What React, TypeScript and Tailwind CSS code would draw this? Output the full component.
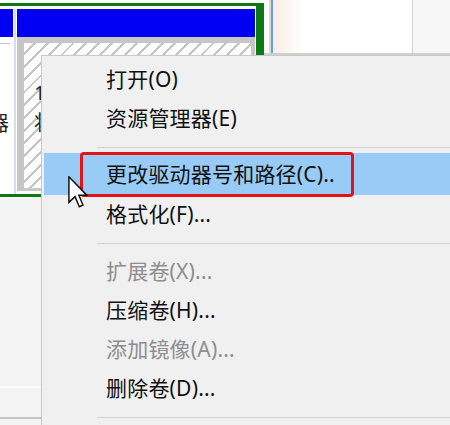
import React from "react";

type Item = { label: string; disabled?: boolean; h: string; highlight?: boolean };

function Sep({ h }: { h: string }) {
  return (
    <div className={`${h} pt-[9px]`}>
      <div className="ml-[53px] h-px bg-[#d2d2d2]" />
    </div>
  );
}

function Row({ label, disabled, h, highlight }: Item) {
  return (
    <div
      className={`relative ${h} flex items-center pl-[62px] text-[21px] tracking-[0.2px] leading-none whitespace-nowrap ${
        highlight ? "bg-[#98cbf5]" : ""
      } ${disabled ? "text-[#8e8e8e]" : "text-[#111111]"}`}
    >
      {label}
      {highlight && (
        <div className="absolute left-[36px] top-[-1px] w-[274px] h-[45px] border-[3px] border-[#e3131c] rounded-[4px]" />
      )}
    </div>
  );
}

export default function App() {
  return (
    <div className="relative w-[450px] h-[425px] overflow-hidden bg-[#f3f3f3] font-['Noto_Sans','Noto_Sans_CJK_SC',sans-serif]">
      {/* background: disk map */}
      <div className="flex h-[198px]">
        <div className="w-[264px] h-[198px] pt-[3px] bg-white">
          <div className="h-[194px] flex pt-[3px] border-t-[3px] border-b-[3px] border-r-[8px] border-[#0b7a12]">
            {/* left partition */}
            <div className="w-[13px] flex flex-col">
              <div className="h-[28px] bg-[#0000f2]" />
              <div className="h-[6px]" />
              <div className="h-px w-[10px] bg-[#c8c8c8]" />
              <div className="mt-[70px] h-[22px] w-[13px] overflow-hidden">
                <div className="ml-[-11px] w-[24px] text-[20px] leading-none text-[#222]">器</div>
              </div>
            </div>
            {/* gap */}
            <div className="w-[4px] flex justify-center">
              <div className="w-[2px] bg-[#d9dee6]" />
            </div>
            {/* main partition */}
            <div className="flex-1 flex flex-col pb-[3px] pr-[1px]">
              <div className="h-[28px] bg-[#0000f2]" />
              <div className="flex-1 border-l-[7px] border-t-[6px] border-r-[4px] border-b-[3px] border-[#c6c6c6] bg-[repeating-linear-gradient(135deg,#ffffff_0px,#ffffff_7px,#c4c4c4_7px,#c4c4c4_9px)] pl-[10px] pt-[40px] flex flex-col gap-[10px] overflow-hidden">
                <span className="text-[20px] leading-none text-[#222] whitespace-nowrap">1</span>
                <span className="text-[20px] leading-none text-[#222] whitespace-nowrap">状</span>
              </div>
            </div>
          </div>
        </div>
        {/* right top area */}
        <div className="flex-1 flex flex-col">
          <div className="h-[53px] flex bg-white">
            <div className="w-[5px] bg-white" />
            <div className="w-[2px] bg-[#dcdcdc]" />
            <div className="w-[2px] bg-[#6d9fd6]" />
            <div className="w-[139px] bg-[linear-gradient(90deg,#f6ede4_0px,#ffffff_30px)]" />
            <div className="w-px bg-[#d4d4d4]" />
            <div className="flex-1 bg-[#f7f7f7]" />
          </div>
          <div className="h-[2px] bg-[#d0d0d0]" />
        </div>
      </div>
      {/* lower left area */}
      <div className="w-[41px] flex flex-col">
        <div className="h-[188px]" />
        <div className="h-[2px] bg-[#fbfbfb]" />
        <div className="h-[29px]" />
        <div className="h-[2px] bg-[#c4c4c4]" />
      </div>

      {/* context menu */}
      <div className="absolute left-[41px] top-[55px] w-[409px] h-[370px] bg-[#f0f0f0] border-l border-t border-[#c9c9c9] pl-[2px] pt-[4px]">
        <Row label="打开(O)" h="h-[39px]" />
        <Row label="资源管理器(E)" h="h-[39px]" />
        <Sep h="h-[15px]" />
        <Row label="更改驱动器号和路径(C).." h="h-[42px]" highlight />
        <Row label="格式化(F)..." h="h-[39px]" />
        <Sep h="h-[18px]" />
        <Row label="扩展卷(X)..." h="h-[39px]" disabled />
        <Row label="压缩卷(H)..." h="h-[39px]" />
        <Row label="添加镜像(A)..." h="h-[39px]" disabled />
        <Row label="删除卷(D)..." h="h-[39px]" />
        <Sep h="h-[18px]" />
      </div>

      {/* mouse cursor */}
      <svg
        className="absolute left-[68px] top-[176px]"
        width="20"
        height="33"
        viewBox="0 0 12 20"
      >
        <path
          d="M0.5 0.5 L0.5 16 L4.2 12.5 L6.8 18.6 L9 17.6 L6.5 11.6 L11.3 11.6 Z"
          fill="#ffffff"
          stroke="#111111"
          strokeWidth="0.9"
          strokeLinejoin="miter"
        />
      </svg>
    </div>
  );
}
